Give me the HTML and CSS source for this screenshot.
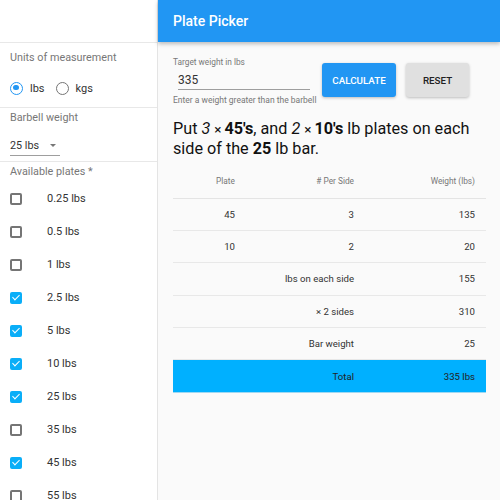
FILE: index.html
```html
<!DOCTYPE html>
<html>
<head>
<meta charset="utf-8">
<link rel="stylesheet" href="styles.css">
</head>
<body>
<div class="layout">
  <aside class="sidebar">
    <div class="spacer"></div>
    <section class="sec sec-units">
      <div class="sec-label">Units of measurement</div>
      <div class="radios">
        <span class="radio on"></span><span class="radio-label">lbs</span>
        <span class="radio"></span><span class="radio-label">kgs</span>
      </div>
    </section>
    <section class="sec sec-bar">
      <div class="sec-label">Barbell weight</div>
      <div class="select"><span>25 lbs</span><span class="caret"></span></div>
    </section>
    <section class="sec sec-plates">
      <div class="sec-label">Available plates *</div>
      <ul class="plates">
        <li><span class="cb"></span>0.25 lbs</li>
        <li><span class="cb"></span>0.5 lbs</li>
        <li><span class="cb"></span>1 lbs</li>
        <li><span class="cb on"></span>2.5 lbs</li>
        <li><span class="cb on"></span>5 lbs</li>
        <li><span class="cb on"></span>10 lbs</li>
        <li><span class="cb on"></span>25 lbs</li>
        <li><span class="cb"></span>35 lbs</li>
        <li><span class="cb on"></span>45 lbs</li>
        <li><span class="cb"></span>55 lbs</li>
      </ul>
    </section>
  </aside>
  <main class="main">
    <header class="appbar">Plate Picker</header>
    <div class="content">
      <div class="form">
        <div class="field">
          <div class="field-label">Target weight in lbs</div>
          <div class="field-input">335</div>
          <div class="field-help">Enter a weight greater than the barbell</div>
        </div>
        <button class="btn btn-primary">CALCULATE</button>
        <button class="btn btn-default">RESET</button>
      </div>
      <p class="result">Put <i>3</i> <span class="x">×</span><b>45's</b>, and <i>2</i> <span class="x">×</span><b>10's</b> lb plates on each side of the <b>25</b> lb bar.</p>
      <table class="tbl">
        <colgroup><col class="c1"><col class="c2"><col class="c3"></colgroup>
        <thead>
          <tr><th>Plate</th><th># Per Side</th><th>Weight (lbs)</th></tr>
        </thead>
        <tbody>
          <tr><td>45</td><td>3</td><td>135</td></tr>
          <tr><td>10</td><td>2</td><td>20</td></tr>
          <tr><td colspan="2">lbs on each side</td><td>155</td></tr>
          <tr><td colspan="2">× 2 sides</td><td>310</td></tr>
          <tr><td colspan="2">Bar weight</td><td>25</td></tr>
          <tr class="total"><td colspan="2">Total</td><td>335 lbs</td></tr>
        </tbody>
      </table>
    </div>
  </main>
</div>
</body>
</html>
```

FILE: styles.css
```css
* { box-sizing: border-box; }
html, body { margin: 0; padding: 0; }
body {
  font-family: Roboto, "Liberation Sans", sans-serif;
  background: #fafafa;
  color: rgba(0,0,0,0.87);
  width: 500px;
  height: 500px;
  overflow: hidden;
}
.layout { display: flex; height: 500px; }

.sidebar {
  width: 158px;
  flex: none;
  background: #fff;
  border-right: 1px solid #e4e4e4;
  overflow: hidden;
}
.spacer { height: 43px; border-bottom: 1px solid #e8e8e8; }
.sec { padding: 0 10px; border-bottom: 1px solid #e8e8e8; }
.sec-label { font-size: 10.8px; line-height: 16px; color: #777; }
.sec-units { padding-top: 7px; padding-bottom: 7px; }
.radios { display: flex; align-items: center; height: 24px; margin-top: 10px; }
.radio {
  width: 13px; height: 13px; border-radius: 50%;
  border: 1.6px solid #757575; position: relative; flex: none;
}
.radio.on { border-color: #2196f3; }
.radio.on::after {
  content: ""; position: absolute; left: 2.2px; top: 2.2px;
  width: 5.4px; height: 5.4px; border-radius: 50%; background: #2196f3;
}
.radio-label { font-size: 11px; margin: 0 11px 0 7px; color: #333; }

.sec-bar { padding-top: 2px; padding-bottom: 5px; }
.select {
  margin-top: 9px; width: 50px; height: 21px;
  border-bottom: 1px solid #9e9e9e;
  display: flex; align-items: center;
  font-size: 10.8px; color: #333;
}
.caret {
  width: 0; height: 0; margin-left: 11px;
  border-left: 3px solid transparent; border-right: 3px solid transparent;
  border-top: 3px solid #777;
}
.sec-plates { padding-top: 2px; border-bottom: none; }
.plates { list-style: none; margin: 2px 0 0; padding: 0; }
.plates li {
  height: 33px; display: flex; align-items: center;
  font-size: 11px; color: #333;
}
.cb {
  width: 12px; height: 12px; border: 2px solid #757575; border-radius: 2px;
  margin-right: 25px; flex: none; position: relative;
}
.cb.on { background: #0aaef8; border-color: #0aaef8; }
.cb.on::after {
  content: ""; position: absolute; left: 1.5px; top: -0.5px;
  width: 3px; height: 6px;
  border: solid #fff; border-width: 0 1.5px 1.5px 0;
  transform: rotate(45deg);
}

.main { flex: 1; min-width: 0; }
.appbar {
  height: 42px; background: #2196f3; color: #fff;
  font-size: 14px; font-weight: 500; line-height: 42px;
  padding-left: 15px;
  box-shadow: 0 2px 4px rgba(0,0,0,0.25);
}
.content { padding: 0 14px 0 15px; }
.form { display: flex; align-items: flex-start; padding-top: 15px; }
.field { width: 149px; }
.field-label { font-size: 8.3px; line-height: 11px; color: #777; }
.field-input {
  margin: 4px 0 0 5px; width: 132px; height: 18px;
  font-size: 12px; line-height: 16px; color: #333;
  border-bottom: 1px solid #9e9e9e;
}
.field-help { font-size: 8.5px; line-height: 12px; color: #777; margin-top: 4px; white-space: nowrap; }
.btn {
  font-family: inherit; font-size: 9.8px; font-weight: 500;
  border: none; border-radius: 3px; height: 34px; margin-top: 6px;
  box-shadow: 0 1px 3px rgba(0,0,0,0.25);
  padding: 0;
}
.btn-primary { background: #2196f3; color: #fff; width: 74px; margin-left: 0; }
.btn-default { background: #e0e0e0; color: #222; width: 63px; margin-left: 10px; }

.result {
  font-size: 16.2px; line-height: 20px; margin: 13px 0 0; color: #111;
}
.result i, .result b, .result .x { line-height: 1; }
.result .x { font-size: 13.5px; margin-right: 3px; }
.result b { font-weight: 700; }

.tbl { width: 313px; border-collapse: collapse; margin-top: 6px; }
.c1 { width: 73px; } .c2 { width: 119px; } .c3 { width: 121px; }
.tbl th, .tbl td { text-align: right; padding: 0 11px 0 0; }
.tbl th {
  height: 33px; font-size: 8.3px; font-weight: 400; color: #777;
  border-bottom: 1px solid #e4e4e4; vertical-align: middle;
}
.tbl td {
  height: 32.4px; font-size: 9.6px; color: #333;
  border-bottom: 1px solid #e8e8e8;
}
.tbl tr.total td { background: #00b0ff; color: #222; border-bottom: 1px solid #9fd8f2; }
```
